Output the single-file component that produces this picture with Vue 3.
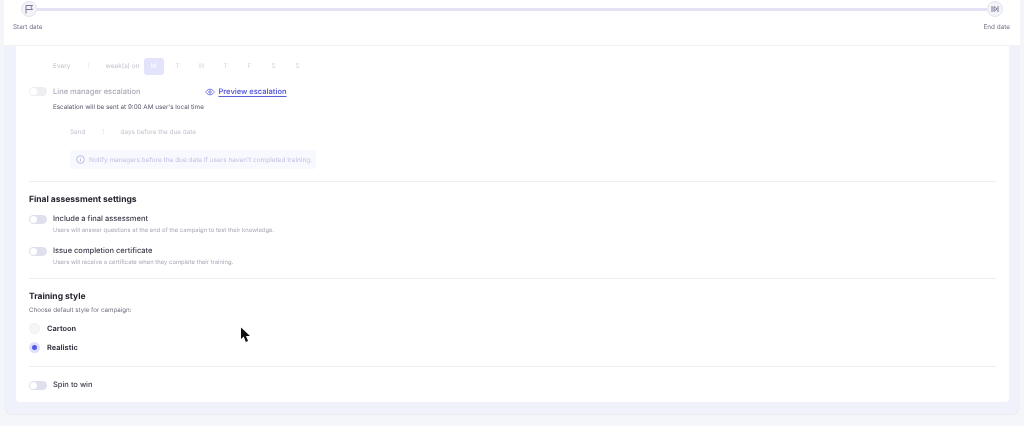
<script setup>
const days = ['M', 'T', 'W', 'T', 'F', 'S', 'S']
</script>

<template>
  <div class="page">
    <div class="shell">
      <header class="timeline">
        <div class="track-row">
          <span class="node">
            <svg width="10" height="10" viewBox="0 0 10 10" fill="none" stroke="#777a92" stroke-width="1">
              <path d="M2 9.500V1.500h6.500L7 3.500 8.500 5.500H2" />
            </svg>
          </span>
          <span class="track"></span>
          <span class="node">
            <svg width="10" height="10" viewBox="0 0 10 10" fill="none" stroke="#777a92" stroke-width="1">
              <path d="M2 2v6M4 2.500 7 5 4 7.500zM8 2v6" />
            </svg>
          </span>
        </div>
        <div class="dates"><span>Start date</span><span>End date</span></div>
      </header>

      <main class="panel">
        <div class="faded-row every">
          <span class="muted">Every</span>
          <span class="num-box">1</span>
          <span class="muted">week(s) on</span>
          <span class="days">
            <span v-for="(d, i) in days" :key="i" class="day" :class="{ active: i === 0 }">{{ d }}</span>
          </span>
        </div>

        <div class="switch-row escalation">
          <span class="switch faint"><i></i></span>
          <span class="label faint-label">Line manager escalation</span>
          <span class="preview">
            <svg width="10" height="10" viewBox="0 0 12 12" fill="none" stroke="#5a5fd8" stroke-width="1">
              <path d="M.8 6S2.800 2.600 6 2.600 11.200 6 11.200 6 9.200 9.400 6 9.400.8 6 .8 6z" />
              <circle cx="6" cy="6" r="1.500" />
            </svg>
            <a>Preview escalation</a>
          </span>
        </div>
        <p class="note">Escalation will be sent at 9:00 AM user's local time</p>

        <div class="faded-row send">
          <span class="muted">Send</span>
          <span class="num-send">1</span>
          <span class="muted">days before the due date</span>
        </div>

        <div class="info">
          <svg width="9" height="9" viewBox="0 0 10 10" fill="none" stroke="#b3b6de" stroke-width="1">
            <circle cx="5" cy="5" r="4.300" /><path d="M5 4.500v2.500M5 2.800v.8" />
          </svg>
          <span>Notify managers before the due date if users haven't completed training.</span>
        </div>

        <hr class="rule first-rule" />

        <h2>Final assessment settings</h2>
        <div class="switch-row option">
          <span class="switch"><i></i></span>
          <span class="label">Include a final assessment</span>
        </div>
        <p class="desc">Users will answer questions at the end of the campaign to test their knowledge.</p>
        <div class="switch-row option second">
          <span class="switch"><i></i></span>
          <span class="label">Issue completion certificate</span>
        </div>
        <p class="desc">Users will receive a certificate when they complete their training.</p>

        <hr class="rule second-rule" />

        <h2 class="style-title">Training style</h2>
        <p class="choose">Choose default style for campaign:</p>
        <label class="radio-row cartoon"><span class="radio"></span><b>Cartoon</b></label>
        <label class="radio-row realistic"><span class="radio on"></span><b>Realistic</b></label>

        <hr class="rule third-rule" />

        <div class="switch-row spin">
          <span class="switch"><i></i></span>
          <span class="label">Spin to win</span>
        </div>
      </main>
    </div>

    <svg class="cursor" width="11" height="16" viewBox="0 0 11 16">
      <path d="M1 0.500V12l2.800-2.500L5.800 15l2.200-1-2-5h4z" fill="#111" />
    </svg>
  </div>
</template>

<style scoped>
.page {
  position: relative;
  width: 1024px;
  height: 426px;
  overflow: hidden;
  background: #f5f6fa;
  font-family: Inter, "Open Sans", sans-serif;
  color: #2a2b38;
  text-rendering: geometricPrecision;
  filter: blur(0.7px);
}
.shell {
  margin: 0 4px;
  width: 1016px;
  height: 414px;
  box-sizing: border-box;
  background: #eff1fb;
  border-radius: 0 0 8px 8px;
  box-shadow: 0 1px 1px #e9eaf1;
}
.timeline {
  height: 46px;
  box-sizing: border-box;
  background: #fff;
  border-bottom: 1px solid #f1f2f6;
  padding: 0 17px;
}
.track-row {
  display: flex;
  align-items: center;
  height: 17px;
}
.node {
  width: 16px;
  height: 16px;
  flex: none;
  display: flex;
  align-items: center;
  justify-content: center;
  background: #f3f3f8;
  border: 1px solid #e3e4ee;
  border-radius: 50%;
  box-sizing: border-box;
}
.track {
  flex: 1;
  height: 3px;
  margin: 1px 0 0;
  background: #e4e3f6;
}
.dates {
  display: flex;
  justify-content: space-between;
  margin: 5px -7px 0 -8px;
  font-size: 6.400px;
  line-height: 10px;
  color: #73758a;
}
.panel {
  margin: 0 11px 0 12px;
  height: 356px;
  box-sizing: border-box;
  background: #fff;
  border-radius: 0 0 4px 4px;
  padding: 0 13px;
  display: flex;
  flex-direction: column;
}
.faded-row {
  display: flex;
  align-items: center;
  font-size: 6.500px;
}
.muted {
  color: #c3c4cf;
}
.every {
  height: 18px;
  margin-top: 11px;
  padding-left: 24px;
}
.num-box {
  width: 20px;
  margin: 0 7px 0 8px;
  text-align: center;
  color: #e2e3ea;
}
.days {
  display: flex;
  gap: 4px;
  margin-left: 4px;
}
.day {
  width: 20px;
  height: 17px;
  display: flex;
  align-items: center;
  justify-content: center;
  color: #d5d6e0;
  border-radius: 3px;
}
.day.active {
  background: #e3e4fc;
  color: #fff;
}
.switch-row {
  display: flex;
  align-items: center;
}
.switch {
  width: 18px;
  height: 9px;
  flex: none;
  display: flex;
  align-items: center;
  padding: 0 1px;
  box-sizing: border-box;
  border-radius: 5px;
  background: #dfe0ee;
}
.switch i {
  width: 7px;
  height: 7px;
  border-radius: 50%;
  background: #fff;
}
.switch.faint {
  background: #eeeef3;
}
.label {
  margin-left: 6px;
  font-size: 7.500px;
  font-weight: 500;
  line-height: 10px;
  color: #3a3b49;
}
.faint-label {
  color: #a8a9b6;
}
.escalation {
  margin-top: 11px;
  height: 11px;
}
.preview {
  display: flex;
  align-items: center;
  gap: 3px;
  margin-left: 65px;
  font-size: 7.500px;
  font-weight: 600;
  color: #5a5fd8;
}
.preview a {
  text-decoration: underline;
  text-underline-offset: 1.500px;
}
.note {
  margin: 6px 0 0 24px;
  font-size: 6.300px;
  line-height: 9px;
  color: #56586a;
}
.send {
  height: 10px;
  margin-top: 15px;
  padding-left: 41px;
  font-size: 6.400px;
}
.num-send {
  width: 35px;
  text-align: center;
  color: #e6e7ec;
}
.info {
  display: flex;
  align-items: center;
  gap: 4px;
  width: 246px;
  height: 19px;
  margin: 13px 0 0 41px;
  padding-left: 6px;
  box-sizing: border-box;
  background: #f8f9fe;
  border-radius: 3px;
  font-size: 6.500px;
  white-space: nowrap;
  color: #c0c3e2;
}
.rule {
  width: 100%;
  height: 1px;
  margin: 0;
  border: 0;
  background: #eeeef1;
  flex: none;
}
.first-rule {
  margin-top: 12px;
}
h2 {
  margin: 12px 0 0;
  font-size: 8.500px;
  line-height: 12px;
  font-weight: 700;
  color: #25262f;
}
.option {
  height: 10px;
  margin-top: 8px;
}
.option.second {
  margin-top: 11px;
}
.desc {
  margin: 2px 0 0 24px;
  font-size: 5.900px;
  line-height: 9px;
  color: #a7a8b5;
}
.second-rule {
  margin-top: 11px;
}
.choose {
  margin: 3px 0 0;
  font-size: 6.200px;
  line-height: 9px;
  color: #6b6d7e;
}
.radio-row {
  display: flex;
  align-items: center;
  gap: 7px;
  height: 11px;
  font-size: 7.400px;
  color: #3a3b47;
}
.radio-row b {
  font-weight: 700;
}
.cartoon {
  margin-top: 8px;
}
.realistic {
  margin-top: 8px;
}
.radio {
  width: 11px;
  height: 11px;
  border-radius: 50%;
  background: #f6f6f9;
  box-sizing: border-box;
  border: 1px solid #f0f0f4;
}
.radio.on {
  background: #5058e6;
  border: 3px solid #dfe1fb;
}
.third-rule {
  margin-top: 13px;
}
.spin {
  height: 10px;
  margin-top: 13px;
}
.cursor {
  position: absolute;
  left: 240px;
  top: 327px;
}
</style>

<style>
html, body {
  background: #f5f6fa;
}
</style>
